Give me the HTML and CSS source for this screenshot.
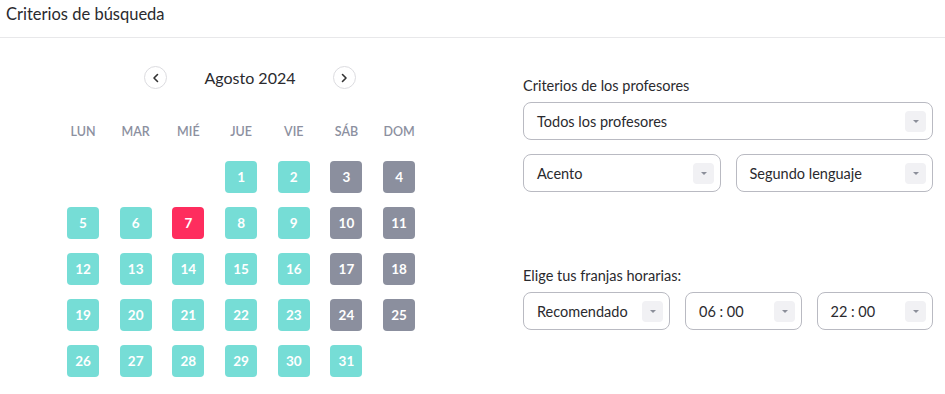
FILE: index.html
```html
<!DOCTYPE html>
<html lang="es">
<head>
	<meta charset="UTF-8">
	<meta name="viewport" content="width=device-width, initial-scale=1.0">
	<title>Criterios de búsqueda</title>
	<link rel="stylesheet" href="styles.css">
</head>
<body>
	<div class="header">Criterios de búsqueda</div>

	<div class="main">
		<div class="calendar">
			<div class="nav">
				<span class="navBtn">
					<svg width="10" height="10" viewBox="0 0 10 10"><path d="M6.5 1.5 L3 5 L6.5 8.5" fill="none" stroke="#333" stroke-width="1.6" stroke-linecap="round" stroke-linejoin="round"/></svg>
				</span>
				<span class="month">Agosto 2024</span>
				<span class="navBtn">
					<svg width="10" height="10" viewBox="0 0 10 10"><path d="M3.5 1.5 L7 5 L3.5 8.5" fill="none" stroke="#333" stroke-width="1.6" stroke-linecap="round" stroke-linejoin="round"/></svg>
				</span>
			</div>

			<div class="days">
				<span class="wd">LUN</span><span class="wd">MAR</span><span class="wd">MIÉ</span><span class="wd">JUE</span><span class="wd">VIE</span><span class="wd">SÁB</span><span class="wd">DOM</span>

				<span></span><span></span><span></span>
				<span class="day">1</span><span class="day">2</span><span class="day off">3</span><span class="day off">4</span>

				<span class="day">5</span><span class="day">6</span><span class="day today">7</span><span class="day">8</span><span class="day">9</span><span class="day off">10</span><span class="day off">11</span>

				<span class="day">12</span><span class="day">13</span><span class="day">14</span><span class="day">15</span><span class="day">16</span><span class="day off">17</span><span class="day off">18</span>

				<span class="day">19</span><span class="day">20</span><span class="day">21</span><span class="day">22</span><span class="day">23</span><span class="day off">24</span><span class="day off">25</span>

				<span class="day">26</span><span class="day">27</span><span class="day">28</span><span class="day">29</span><span class="day">30</span><span class="day">31</span>
			</div>
		</div>

		<div class="filters">
			<p class="label">Criterios de los profesores</p>
			<div class="select full">
				<span>Todos los profesores</span><i class="caret"></i>
			</div>
			<div class="row two">
				<div class="select"><span>Acento</span><i class="caret"></i></div>
				<div class="select"><span>Segundo lenguaje</span><i class="caret"></i></div>
			</div>

			<p class="label second">Elige tus franjas horarias:</p>
			<div class="row three">
				<div class="select"><span>Recomendado</span><i class="caret"></i></div>
				<div class="select"><span>06 : 00</span><i class="caret"></i></div>
				<div class="select"><span>22 : 00</span><i class="caret"></i></div>
			</div>
		</div>
	</div>
</body>
</html>
```

FILE: styles.css
```css
body {
	margin: 0;
	font-family: Lato, "Noto Sans", sans-serif;
	color: #2a2a2e;
	background: #fff;
}

.header {
	height: 37px;
	line-height: 28px;
	padding-left: 6px;
	font-size: 16.5px;
	border-bottom: 1px solid #e8e8ea;
}

.main { display: flex; }

/* calendar */
.calendar {
	padding-left: 67px;
	width: 348px;
}

.nav {
	display: flex;
	align-items: center;
	justify-content: center;
	gap: 37px;
	margin-top: 28px;
	padding-left: 18px;
}

.navBtn {
	width: 21px;
	height: 21px;
	border: 1px solid #dcdce0;
	border-radius: 50%;
	display: flex;
	align-items: center;
	justify-content: center;
}

.month { font-size: 16px; }

.days {
	display: grid;
	grid-template-columns: repeat(7, 32px);
	column-gap: 20.7px;
	row-gap: 14px;
	margin-top: 36px;
}

.wd {
	text-align: center;
	font-size: 12.5px;
	font-weight: 600;
	color: #8c90a0;
	height: 14px;
	line-height: 14px;
	margin-bottom: 8px;
}

.day {
	height: 32px;
	border-radius: 4px;
	background: #76ddd6;
	color: #fff;
	font-size: 13.5px;
	font-weight: 700;
	display: flex;
	align-items: center;
	justify-content: center;
}
.day.off { background: #8b8f9e; }
.day.today { background: #fe2d5e; }

/* right side */
.filters {
	margin-left: 108px;
	width: 410px;
}

.label {
	margin: 39px 0 8px;
	font-size: 14.5px;
	line-height: 17px;
}
.label.second { margin-top: 75px; }

.select {
	box-sizing: border-box;
	height: 38px;
	border: 1px solid #b9bac2;
	border-radius: 8px;
	display: flex;
	align-items: center;
	justify-content: space-between;
	padding: 0 6px 0 13px;
	font-size: 14.5px;
}

.row { display: flex; gap: 15px; margin-top: 14px; }
.row.three { margin-top: 0; }
.row .select { flex: 1; }
.row.three .select:first-child { flex: 0 0 147px; }

.caret {
	width: 21px;
	height: 21px;
	background: #f1f1f4;
	border-radius: 4px;
	position: relative;
}
.caret::after {
	content: "";
	position: absolute;
	left: 8px;
	top: 9px;
	border-left: 3px solid transparent;
	border-right: 3px solid transparent;
	border-top: 3px solid #8c8f9a;
}
```
